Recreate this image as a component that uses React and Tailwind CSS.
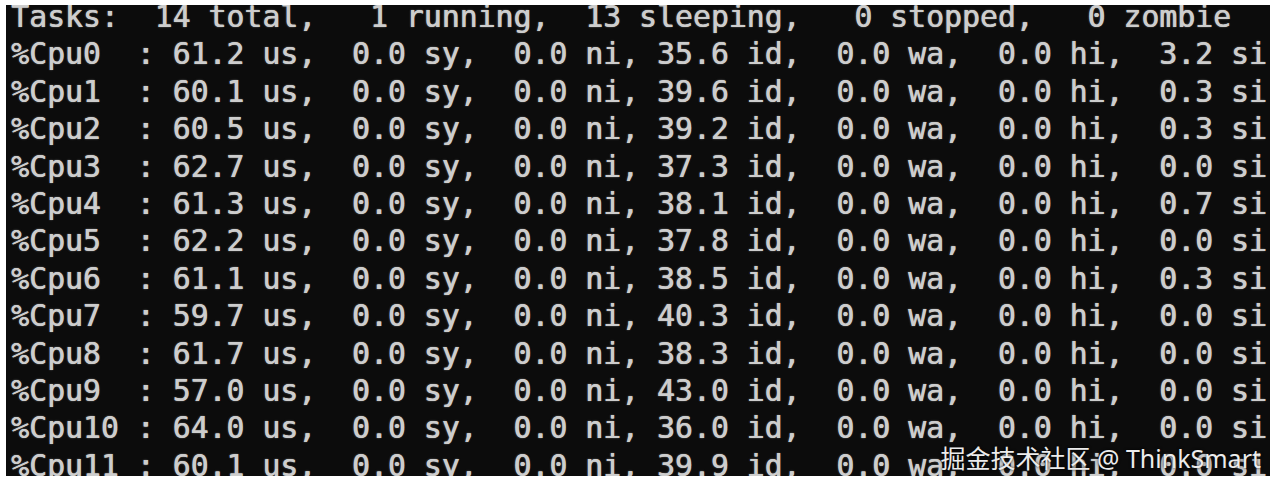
import React from 'react';

const rows = [
  ['0', '61.2', '35.6', '3.2'],
  ['1', '60.1', '39.6', '0.3'],
  ['2', '60.5', '39.2', '0.3'],
  ['3', '62.7', '37.3', '0.0'],
  ['4', '61.3', '38.1', '0.7'],
  ['5', '62.2', '37.8', '0.0'],
  ['6', '61.1', '38.5', '0.3'],
  ['7', '59.7', '40.3', '0.0'],
  ['8', '61.7', '38.3', '0.0'],
  ['9', '57.0', '43.0', '0.0'],
  ['10', '64.0', '36.0', '0.0'],
  ['11', '60.1', '39.9', '0.0'],
];

const cpuLine = ([id, us, idle, si]) =>
  `%Cpu${id.padEnd(2, ' ')} : ${us} us,  0.0 sy,  0.0 ni, ${idle} id,  0.0 wa,  0.0 hi,  ${si} si`;

const App = () => {
  return (
    <div className="w-[1280px] h-[488px] bg-white pt-[5px] pl-[6px]">
      <div className="relative w-[1264px] h-[471px] bg-[#0c0c0c] overflow-hidden">
        <div className="-mt-[7px] pl-[5px] font-['DejaVu_Sans_Mono',monospace] text-[29.8px] leading-[37.4px] text-[#cdcdcd] whitespace-pre [text-shadow:0.6px_0_0_#cdcdcd,0_0_2px_rgba(205,205,205,0.5)]">
          <div>Tasks:  14 total,   1 running,  13 sleeping,   0 stopped,   0 zombie</div>
          {rows.map((r) => (
            <div key={r[0]}>{cpuLine(r)}</div>
          ))}
        </div>

        {/* watermark */}
        <div className="absolute right-[9px] bottom-[3px] font-['Noto_Sans','Noto_Sans_CJK_SC',sans-serif] text-[25px] leading-[30px] text-[#ececec] [text-shadow:0_0_3px_rgba(0,0,0,0.95)]">
          掘金技术社区 @ ThinkSmart
        </div>
      </div>
    </div>
  );
};

export default App;
